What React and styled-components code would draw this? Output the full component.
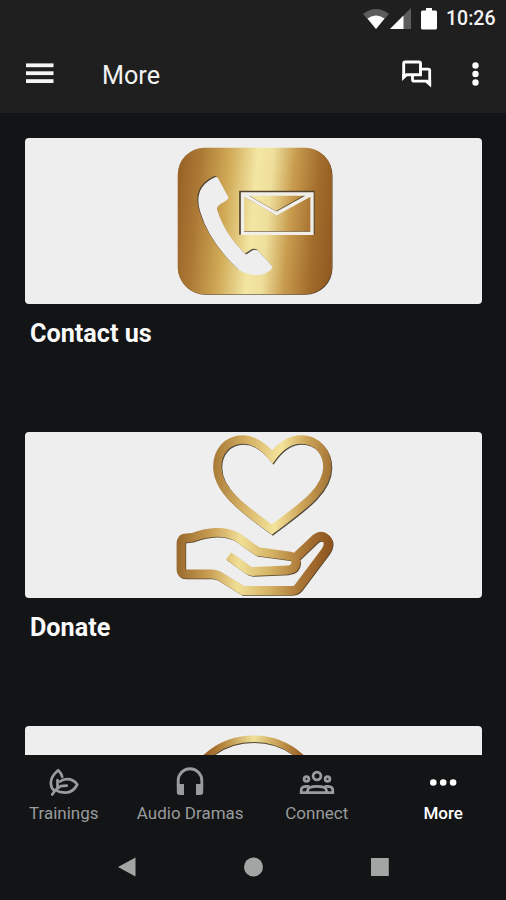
import React from "react";
import styled, { createGlobalStyle } from "styled-components";

const GlobalStyle = createGlobalStyle`
  * {
    box-sizing: border-box;
  }

  body {
    margin: 0;
    background: #121415;
    font-family: Roboto, "Liberation Sans", sans-serif;
  }

  svg {
    display: block;
  }
`;

const Screen = styled.div`
  width: 506px;
  height: 900px;
  display: flex;
  flex-direction: column;
  overflow: hidden;
  background: #121415;
  color: #fff;
`;

const Header = styled.header`
  height: 113px;
  flex: none;
  background: #1f1f1f;
`;

const StatusBar = styled.div`
  height: 37px;
  padding: 0 11px 0 0;
  display: flex;
  justify-content: flex-end;
  align-items: center;
`;

const Clock = styled.span`
  width: 49px;
  margin-left: 9px;
  font-size: 19.5px;
  line-height: 37px;
  font-weight: 500;
  white-space: nowrap;
  color: #f4f4f4;
`;

const AppBar = styled.div`
  height: 76px;
  padding: 0 27px 2px 26px;
  display: flex;
  align-items: center;
`;

const Title = styled.h1`
  flex: 1;
  margin: 2px 0 0 48px;
  font-size: 25.2px;
  font-weight: 400;
  color: #f2f2f2;
`;

const Actions = styled.div`
  display: flex;
  align-items: center;
  gap: 40px;
`;

const Content = styled.main`
  height: 642px;
  flex: none;
  padding: 25px 24px 0 25px;
  overflow: hidden;
`;

const Card = styled.section`
  height: 294px;
`;

const Banner = styled.div`
  height: 166px;
  border-radius: 4px;
  overflow: hidden;
  background: #eee;
`;

const CardTitle = styled.h2`
  margin: 14px 0 0 5px;
  font-size: 25.2px;
  line-height: 32px;
  font-weight: 700;
  color: #fafafa;
`;

const Tabs = styled.nav`
  height: 79px;
  flex: none;
  display: grid;
  grid-template-columns: repeat(4, 1fr);
`;

const Tab = styled.div`
  display: flex;
  flex-direction: column;
  align-items: center;
  padding: 10px 0 0 1px;
  color: ${(props) => (props.$active ? "#fff" : "#999b9c")};
  font-size: 17px;
  line-height: 24px;
  font-weight: ${(props) => (props.$active ? 500 : 400)};
  white-space: nowrap;
`;

const TabIcon = styled.div`
  height: 36px;
`;

const SystemNav = styled.div`
  height: 66px;
  display: flex;
  justify-content: center;
  align-items: center;
  gap: 107px;
`;

const WifiIcon = () => (
  <svg width="26" height="20" viewBox="0 0 26 20">
    <path d="M0 5Q13-5 26 5L13 20Z" fill="#5c5c5c" />
    <path d="M4.500 9.500Q13 3.500 21.500 9.500L13 20Z" fill="#fff" />
  </svg>
);

const SignalSvg = styled.svg`
  margin-left: 1px;
`;

const SignalIcon = () => (
  <SignalSvg width="21" height="21" viewBox="0 0 21 21">
    <path d="M21 0V21H0Z" fill="#5c5c5c" />
    <path d="M13.500 7.500V21H0Z" fill="#fff" />
  </SignalSvg>
);

const BatterySvg = styled.svg`
  margin-left: 10px;
`;

const BatteryIcon = () => (
  <BatterySvg width="16" height="22" viewBox="0 0 16 22">
    <path
      d="M5 0h6v2.500h3.500q1.500 0 1.500 1.500v16q0 1.500-1.500 1.500h-13q-1.500 0-1.500-1.500v-16q0-1.500 1.500-1.500h3.500z"
      fill="#fff"
    />
  </BatterySvg>
);

const MenuIcon = () => (
  <svg width="28" height="22" viewBox="0 0 28 22" fill="#f5f5f5">
    <rect y="0.400" width="27.500" height="3.800" />
    <rect y="8.300" width="27.500" height="3.800" />
    <rect y="16.200" width="27.500" height="3.800" />
  </svg>
);

const ForumIcon = () => (
  <svg width="30" height="28" viewBox="402 60 30 28" fill="none" stroke="#fff">
    <path
      d="M403.700 77V63.500Q403.700 62 405.200 62H419Q420.500 62 420.500 63.500V74.700H406.500Z"
      strokeWidth="2.900"
    />
    <path d="M402.200 74V81L407.500 75.500Z" fill="#fff" stroke="none" />
    <path
      d="M421 69.200H428.300Q429.700 69.200 429.700 70.600V83L427 81.200H414Q412.500 81.200 412.500 79.800V76"
      strokeWidth="2.800"
    />
    <path d="M431.100 80V87.500L424.500 81.500Z" fill="#fff" stroke="none" />
  </svg>
);

const KebabIcon = () => (
  <svg width="7" height="24" viewBox="0 0 7 24" fill="#fff">
    <circle cx="3.500" cy="3.500" r="3.200" />
    <circle cx="3.500" cy="12" r="3.200" />
    <circle cx="3.500" cy="20.500" r="3.200" />
  </svg>
);

const LeafIcon = () => (
  <svg
    width="30"
    height="32"
    viewBox="0 0 30 32"
    fill="none"
    stroke="currentColor"
    strokeWidth="2.700"
    strokeLinecap="round"
    strokeLinejoin="round"
  >
    <path d="M13.200 11.800Q12.300 8 9.200 5.200Q2 11 1.800 18Q1.800 22.500 5 25.500" />
    <path d="M11 16.500Q14 14.200 18 14.200Q24.500 14.200 28.300 19.500Q24 27.700 16.500 27.700Q10.500 27.700 6.500 25L3.200 29.500" />
    <path d="M6.500 25L11.500 21.200L17.800 20.700M8.500 23.500V15" />
  </svg>
);

const HeadphonesIcon = () => (
  <svg width="28" height="30" viewBox="0 0 28 30">
    <path
      d="M2.200 20V15.500A11.800 11.800 0 0 1 25.800 15.500V20"
      fill="none"
      stroke="currentColor"
      strokeWidth="2.900"
    />
    <path
      d="M.8 19H8V30H3.800Q.8 30 .8 27ZM27.200 19H20V30H24.200Q27.200 30 27.200 27Z"
      fill="currentColor"
    />
  </svg>
);

const GroupIcon = () => (
  <svg
    width="36"
    height="30"
    viewBox="0 0 36 30"
    fill="none"
    stroke="currentColor"
    strokeWidth="2.800"
  >
    <circle cx="18" cy="11" r="3.900" />
    <circle cx="7.500" cy="14" r="2.400" />
    <circle cx="28.500" cy="14" r="2.400" />
    <path d="M10.500 21.700Q2.200 20.500 2.200 25.500V27.600H33.800V25.500Q33.800 20.500 25.500 21.700" />
    <path d="M8.500 27.500V25.500Q9 21.400 18 21.400Q27 21.400 27.500 25.500V27.500" />
  </svg>
);

const DotsIcon = () => (
  <svg width="28" height="30" viewBox="0 0 28 30" fill="currentColor">
    <circle cx="4.300" cy="17.500" r="3.300" />
    <circle cx="14.200" cy="17.500" r="3.300" />
    <circle cx="24.100" cy="17.500" r="3.300" />
  </svg>
);

const ContactArt = () => (
  <svg width="457" height="166" viewBox="25 138 457 166">
    <defs>
      <linearGradient
        id="goldTile"
        gradientUnits="userSpaceOnUse"
        x1="177"
        y1="214"
        x2="333"
        y2="228"
      >
        <stop offset="0" stopColor="#9a6428" />
        <stop offset="0.120" stopColor="#ac7935" />
        <stop offset="0.300" stopColor="#d0a956" />
        <stop offset="0.480" stopColor="#f3e6a3" />
        <stop offset="0.580" stopColor="#eedf9b" />
        <stop offset="0.720" stopColor="#c89c4f" />
        <stop offset="0.880" stopColor="#a36d2c" />
        <stop offset="1" stopColor="#925b22" />
      </linearGradient>
      <path
        id="handset"
        d="M215.500 177Q217.500 176.500 218.500 179L228.500 197.500Q228 199.500 224 202Q216 206 217 209.500Q225 235 246 254.500L250 252Q254 248.500 258 250.500L272.500 266.500Q271 272 262 274.500Q250 276.500 239 270Q209 242 200 211Q193 187 215.500 177Z"
      />
    </defs>
    <rect x="178.500" y="148.500" width="154" height="146.300" rx="27" fill="#4a3a25" />
    <rect
      x="177.700"
      y="147.700"
      width="154.300"
      height="146.500"
      rx="27"
      fill="url(#goldTile)"
    />
    <use href="#handset" x="-1" y="-1" fill="#4d4234" />
    <use href="#handset" fill="#eee" />
    <g fill="none" strokeLinejoin="miter">
      <path
        d="M240.800 192.500H313V233H240.800ZM243 194L276 213L310 194"
        stroke="#52422c"
        strokeWidth="3.300"
      />
      <path
        d="M242.500 194H312V233.300H242.500ZM243.500 194.500L276.500 213.500L311 194.500"
        stroke="#f1eee8"
        strokeWidth="3.300"
      />
    </g>
  </svg>
);

const DonateArt = () => (
  <svg width="457" height="166" viewBox="25 432 457 166">
    <defs>
      <linearGradient
        id="goldHeart"
        gradientUnits="userSpaceOnUse"
        x1="213"
        y1="475"
        x2="332"
        y2="485"
      >
        <stop offset="0" stopColor="#a97b38" />
        <stop offset="0.250" stopColor="#d3ad60" />
        <stop offset="0.550" stopColor="#f4e49c" />
        <stop offset="0.750" stopColor="#cfa75b" />
        <stop offset="1" stopColor="#a06f32" />
      </linearGradient>
      <linearGradient
        id="goldHand"
        gradientUnits="userSpaceOnUse"
        x1="177"
        y1="555"
        x2="333"
        y2="565"
      >
        <stop offset="0" stopColor="#9a692d" />
        <stop offset="0.200" stopColor="#c69b50" />
        <stop offset="0.400" stopColor="#f1df96" />
        <stop offset="0.600" stopColor="#d5b365" />
        <stop offset="0.800" stopColor="#aa7635" />
        <stop offset="1" stopColor="#8b511d" />
      </linearGradient>
      <path
        id="heart"
        d="M272.300 457Q258 439.500 243 439.500C227 439.500 217 452 217.300 467C217.300 490 242 508 271.800 529.500C302 507 327.300 490 327.300 467C327.300 452 317 439.500 301 439.500Q285 439.500 272.300 457Z"
      />
      <path
        id="hand"
        d="M228.500 556L244 567Q249 571.500 253 571.500L288 570Q295.500 569 296 562.500Q296 557 290 556L258 551.500Q252 548 238 537.500Q229 532 216 532.300Q205 532.500 192 537.500L186 538Q181 538 181 543.500V570Q181 574 185 574H211Q217 574 221 577L243 590.500H292Q296.500 590.500 299 586.500L325 552Q331 544 326 538.500Q321 534 315 539L296.500 556.500"
      />
    </defs>
    <g fill="none" strokeLinejoin="miter">
      <use href="#heart" x="1" y="1.200" stroke="#514b3f" strokeWidth="8" />
      <use href="#heart" stroke="url(#goldHeart)" strokeWidth="8.300" />
      <use href="#hand" x="0.900" y="0.900" stroke="#5d4a30" strokeWidth="8.500" />
      <use href="#hand" stroke="url(#goldHand)" strokeWidth="8.800" />
    </g>
  </svg>
);

const CircleArt = () => (
  <svg width="457" height="166" viewBox="25 726 457 166">
    <defs>
      <linearGradient id="goldRing" x1="0" x2="1">
        <stop offset="0.150" stopColor="#985c22" />
        <stop offset="0.300" stopColor="#b98a42" />
        <stop offset="0.500" stopColor="#f0e198" />
        <stop offset="0.700" stopColor="#c0954b" />
        <stop offset="0.850" stopColor="#985c22" />
      </linearGradient>
    </defs>
    <circle cx="254" cy="810.500" r="70.500" fill="none" stroke="#514633" strokeWidth="6" />
    <circle cx="253.500" cy="809.500" r="70.700" fill="none" stroke="url(#goldRing)" strokeWidth="6.600" />
  </svg>
);

const cards = [
  { title: "Contact us", Art: ContactArt },
  { title: "Donate", Art: DonateArt },
  { title: "", Art: CircleArt },
];

const tabs = [
  { label: "Trainings", Icon: LeafIcon },
  { label: "Audio Dramas", Icon: HeadphonesIcon },
  { label: "Connect", Icon: GroupIcon },
  { label: "More", Icon: DotsIcon, active: true },
];

const App = () => {
  return (
    <>
      <GlobalStyle />
      <Screen>
        <Header>
          <StatusBar>
            <WifiIcon />
            <SignalIcon />
            <BatteryIcon />
            <Clock>10:26</Clock>
          </StatusBar>
          <AppBar>
            <MenuIcon />
            <Title>More</Title>
            <Actions>
              <ForumIcon />
              <KebabIcon />
            </Actions>
          </AppBar>
        </Header>
        <Content>
          {cards.map(({ title, Art }, i) => (
            <Card key={i}>
              <Banner>
                <Art />
              </Banner>
              {title && <CardTitle>{title}</CardTitle>}
            </Card>
          ))}
        </Content>
        <Tabs>
          {tabs.map(({ label, Icon, active }) => (
            <Tab key={label} $active={active}>
              <TabIcon>
                <Icon />
              </TabIcon>
              {label}
            </Tab>
          ))}
        </Tabs>
        <SystemNav>
          <svg width="19" height="20" viewBox="0 0 19 20">
            <path d="M18.500 .5V19.500L1 10Z" fill="#a3a5a5" />
          </svg>
          <svg width="20" height="20" viewBox="0 0 20 20">
            <circle cx="10.500" cy="10" r="9.500" fill="#a3a5a5" />
          </svg>
          <svg width="19" height="20" viewBox="0 0 19 20">
            <rect x="1" y="1" width="17.800" height="18" fill="#a3a5a5" />
          </svg>
        </SystemNav>
      </Screen>
    </>
  );
};

export default App;
